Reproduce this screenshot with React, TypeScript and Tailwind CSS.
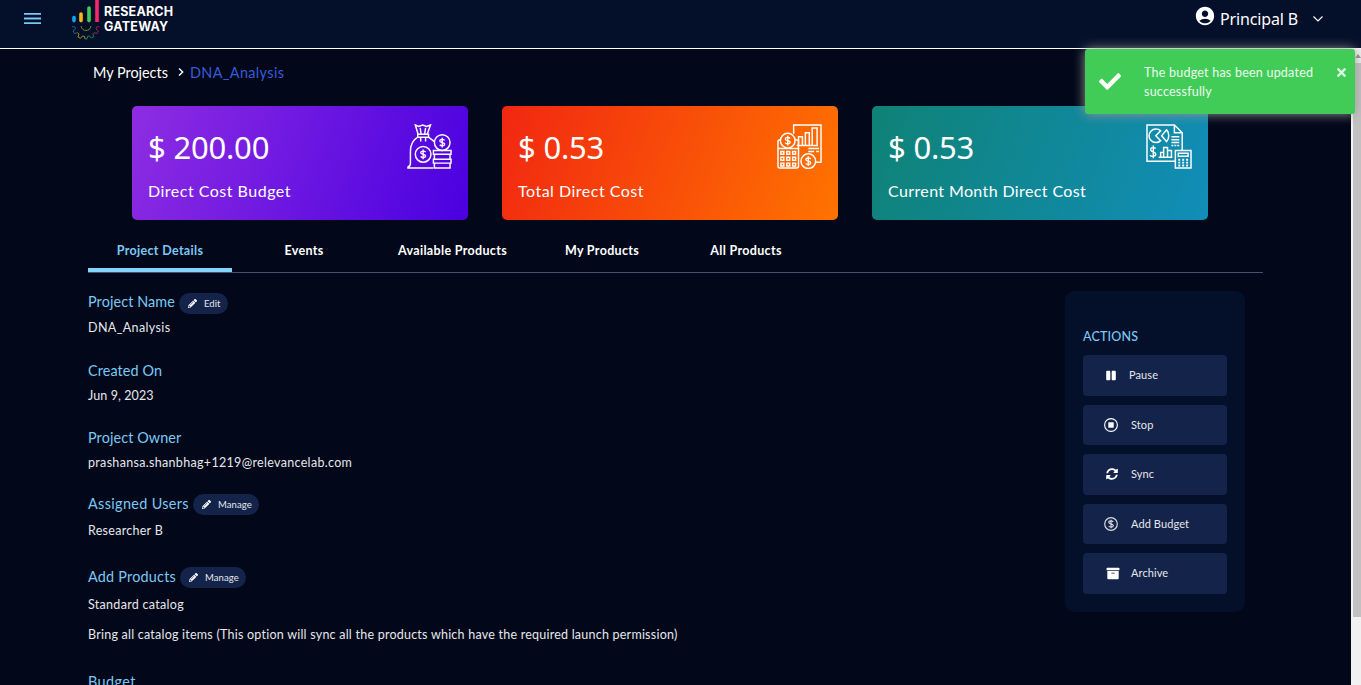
import { useState, type ReactNode } from 'react'
import clsx from 'clsx'
import { FaArchive, FaCheck, FaPause, FaPencilAlt, FaSyncAlt, FaTimes } from 'react-icons/fa'
import { MdAccountCircle } from 'react-icons/md'

const cards = [
  {
    amount: '$ 200.00',
    label: 'Direct Cost Budget',
    bg: 'bg-[linear-gradient(110deg,#8e2de2,#4a00e0)]',
    tracking: 'tracking-[0.5px]',
    icon: <MoneyBagIcon />,
  },
  {
    amount: '$ 0.53',
    label: 'Total Direct Cost',
    bg: 'bg-[linear-gradient(110deg,#f12711,#ff7300)]',
    tracking: 'tracking-[0.5px]',
    icon: <CostReportIcon />,
  },
  {
    amount: '$ 0.53',
    label: 'Current Month Direct Cost',
    bg: 'bg-[linear-gradient(110deg,#0f8275,#118db8)]',
    tracking: 'tracking-[0.38px]',
    icon: <MonthReportIcon />,
  },
]

const tabs = [
  { name: 'Project Details', width: 'w-36' },
  { name: 'Events', width: 'w-36' },
  { name: 'Available Products', width: 'w-[153px]' },
  { name: 'My Products', width: 'w-[146px]' },
  { name: 'All Products', width: 'w-[142px]' },
]

function Logo() {
  return (
    <div className="flex h-10 w-[104px] gap-1">
      <svg viewBox="0 0 28 40" className="h-10 w-7 shrink-0">
        <g strokeWidth="3.6" strokeLinecap="round">
          <path d="M2 17.6v3" stroke="#0ea5f5" />
          <path d="M9 14v6.6" stroke="#fbb713" />
          <path d="M17 8v12.6" stroke="#3ecb59" />
        </g>
        <path d="M25 0v22" stroke="#f9266c" strokeWidth="3.6" />
        <path d="M9 26c1 6 9 6 10 0" fill="none" stroke="#8d8f22" strokeWidth="0.9" />
        <g fill="none" strokeWidth="0.9" strokeLinejoin="round">
          <path d="M0 26.5l3 .5.5 2-2.5 2 1.5 2.5 3-.8" stroke="#1c6c8c" />
          <path d="M5.5 32.7l1.5 1.3-1 3 2.5 1.3 2-2.3 2 .4.5 2.6" stroke="#b99a1c" />
          <path d="M13 39h2l.5-2.6 2-.5 2 2.2 2.3-1.4-1-2.7" stroke="#2f8a4c" />
          <path d="M20.8 34l1.2-1.3 3 .8 1.3-2.5-2.3-2 .5-2 2.8-.5" stroke="#a52753" />
        </g>
      </svg>
      <p className="pt-1 font-['Inter'] text-[12.5px] leading-[15px] font-bold text-white">
        <span className="block tracking-[0.2px]">RESEARCH</span>
        <span className="block tracking-[0.25px]">GATEWAY</span>
      </p>
    </div>
  )
}

function MoneyBagIcon() {
  return (
    <svg viewBox="0 0 46 46" className="h-[45px] w-[45px] shrink-0" fill="none" stroke="#fff" strokeWidth="1.5">
      <path d="M11.5 11L8.5 1l3.5 1.5L16 1l4 1.5L24 1l-3.5 10M13.5 4l1 7M19 4l-1 7" />
      <path d="M11 10.5h11v3H11zM14 14v4M19 14v4" />
      <path d="M11 13.5C5 17 3.5 22 3.5 28v12c0 2.5-1 3.5-2.500 4V45h26M22 13.5l6 4.5" />
      <circle cx="16.5" cy="31" r="8" />
      <circle cx="36" cy="19" r="8" />
      <path d="M27 27h18v4H27zM28 31h16v5H28zM27 36h18v4H27zM28 40h16v5H28z" />
      <Dollar x={16.5} y={31} />
      <Dollar x={36} y={19} />
    </svg>
  )
}

function CostReportIcon() {
  return (
    <svg viewBox="0 0 46 46" className="h-[45px] w-[45px] shrink-0" fill="none" stroke="#fff" strokeWidth="1.5">
      <path d="M17 10V1h28v38h-6M20 22h22M32 25h11M32 28h6M40 28h3" />
      <path d="M22 22v-9h4v9M29 22V9h4v13M36 22V4h5v18" />
      <circle cx="11" cy="17" r="7.5" />
      <path d="M4 16H3c-1 0-2 1-2 2v25c0 1 1 2 2 2h17c1 0 2-1 2-2V17l-3-1M1 25h21" />
      <path d="M4 28h3v3H4zM10 28h3v3h-3zM16 28h3v3h-3zM4 34h3v3H4zM10 34h3v3h-3zM16 34h3v3h-3zM4 40h3v3H4zM10 40h3v3h-3zM16 40h3v3h-3z" />
      <circle cx="32" cy="38" r="7.5" />
      <Dollar x={11} y={17} />
      <Dollar x={32} y={38} />
    </svg>
  )
}

function MonthReportIcon() {
  return (
    <svg viewBox="0 0 47 46" className="h-[45px] w-[46px] shrink-0" fill="none" stroke="#fff" strokeWidth="1.5">
      <path d="M30 38H1V1h28l8 8v18M29 1v8h8" />
      <path d="M15 7a7 7 0 1 0 0 10l-5-5z" />
      <path d="M16 12l5-6c3 3 3 9 0 12z" />
      <path d="M26 13h8M26 16h8M26 19h8M26 22h2M29 22h2M32 22h2" />
      <path d="M13 34h14M15 34v-5h3v5M18 34V24h4v10M22 34v-7h4v7" />
      <path d="M30 27h16v18H30zM33 30h10v3H33z" />
      <path d="M33 36.5h10M33 39.5h10M33 42.5h10" strokeWidth="2" strokeDasharray="2 2" />
      <path d="M10 25c-4-2-6 0-5 2 1 2 5 1 5 4 0 2-4 3-6 1M7.5 22v13" />
    </svg>
  )
}

function Dollar({ x, y }: { x: number; y: number }) {
  return (
    <g transform={`translate(${x} ${y})`}>
      <path d="M2.5-2.2C1-4-2.5-3.5-2.5-1.5c0 2 5 1 5 3C2.5 3.5-1 4-2.5 2.2M0-5v10" strokeWidth="1.4" />
    </g>
  )
}

function PillButton({ children }: { children: ReactNode }) {
  return (
    <button className="flex h-[21px] items-center rounded-full bg-[#14234a] pr-[7px] pl-[9px] text-[9.5px] tracking-[0.1px] text-gray-200">
      <FaPencilAlt className="mr-[7px] mb-px h-[9px] w-[9px] text-white" />
      <span className="pt-px">{children}</span>
    </button>
  )
}

function Label({ children, className }: { children: ReactNode; className?: string }) {
  return <h4 className={clsx('text-[14.4px] leading-[22px] text-[#7cc8f5]', className)}>{children}</h4>
}

function Value({ children, className }: { children: ReactNode; className?: string }) {
  return <p className={clsx('text-[12.5px] leading-5 text-gray-200', className)}>{children}</p>
}

function Action({ icon, children, className }: { icon: ReactNode; children: ReactNode; className?: string }) {
  return (
    <button className="flex h-[40.5px] w-36 items-center rounded bg-[#14234a] pl-[21px] text-[11px] tracking-[0.1px] text-gray-200">
      <span className="flex w-[27px] items-center text-white">{icon}</span>
      <span className={className}>{children}</span>
    </button>
  )
}

export default function App() {
  const [activeTab, setActiveTab] = useState('Project Details')
  const [showToast, setShowToast] = useState(true)

  return (
    <div className="relative flex h-[685px] w-full flex-col overflow-hidden bg-[#020819] font-['Lato',sans-serif]">
      <header className="flex h-[49px] shrink-0 items-start justify-between border-b border-white bg-[#040f29] pr-[38px] pl-6">
        <div className="flex items-start">
          <svg viewBox="0 0 17 13" className="mt-3 mr-[31px] h-[13px] w-[17px]" stroke="#7cc8f5" strokeWidth="1.8">
            <path d="M0 1.8h17M0 6.5h17M0 11.2h17" />
          </svg>
          <Logo />
        </div>
        <div className="flex h-9 items-center text-white">
          <MdAccountCircle className="mb-1 h-[22px] w-[22px]" />
          <span className="mt-0.5 ml-1 font-['Noto_Sans'] text-base tracking-[-0.15px]">Principal B</span>
          <svg viewBox="0 0 10 6" className="mt-0.5 ml-[15px] h-1.5 w-[10px]" fill="none" stroke="#fff" strokeWidth="1.2">
            <path d="M.5.5L5 5 9.5.5" />
          </svg>
        </div>
      </header>

      <div className="flex min-h-0 flex-1">
        <main className="min-w-0 flex-1 overflow-hidden pl-[88px]">
          <nav className="flex h-[57px] items-start pt-[13px] pl-[5px] text-[14.4px] leading-[22px]">
            <span className="w-[75px] whitespace-nowrap text-white">My Projects</span>
            <svg viewBox="0 0 6 8" className="mt-1.5 mr-[6px] ml-[10px] h-2 w-1.5" fill="none" stroke="#fff" strokeWidth="1.4">
              <path d="M1 .5L4.7 4 1 7.5" />
            </svg>
            <span className="tracking-[0.38px] text-[#365bdc]">DNA_Analysis</span>
          </nav>

          <section className="flex gap-[34px] pl-11">
            {cards.map((card) => (
              <div key={card.label} className={clsx('flex h-[114px] w-[336px] shrink-0 justify-between rounded-[5px] pt-[18px] pr-4 pl-4 text-white', card.bg)}>
                <div>
                  <p className="font-['Noto_Sans'] text-[31px] leading-[46px] tracking-[-0.2px]">{card.amount}</p>
                  <p className={clsx('mt-[10px] text-base leading-[22px]', card.tracking)}>{card.label}</p>
                </div>
                {card.icon}
              </div>
            ))}
          </section>

          <div className="mt-2 flex h-[45px] w-[1175px] border-b border-[#465270]">
            {tabs.map((tab) => (
              <button
                key={tab.name}
                onClick={() => setActiveTab(tab.name)}
                className={clsx(
                  'h-11 border-b-4 pt-1.5 text-[12.5px] leading-[34px] font-bold tracking-[0.33px] whitespace-nowrap',
                  tab.width,
                  activeTab === tab.name ? 'border-[#87d3ff] text-[#7cc8f5]' : 'border-transparent text-white',
                )}
              >
                {tab.name}
              </button>
            ))}
          </div>

          <div className="flex items-start justify-between pt-[18px] pr-[106px]">
            <section className="pt-px">
              <div className="flex items-start gap-1">
                <Label className="-mt-px tracking-[0.1px]">Project Name</Label>
                <div className="mt-px"><PillButton>Edit</PillButton></div>
              </div>
              <Value className="mt-1 tracking-[0.38px]">DNA_Analysis</Value>

              <Label className="mt-[22px] tracking-[0.1px]">Created On</Label>
              <Value className="mt-1 tracking-[0.1px]">Jun 9, 2023</Value>

              <Label className="mt-[21px] tracking-[0.1px]">Project Owner</Label>
              <Value className="mt-1 tracking-[0.32px]">prashansa.shanbhag+1219@relevancelab.com</Value>

              <div className="mt-[20px] flex items-start gap-1">
                <Label className="tracking-[0.35px]">Assigned Users</Label>
                <div className="mt-px"><PillButton>Manage</PillButton></div>
              </div>
              <Value className="mt-1.5 tracking-[0.28px]">Researcher B</Value>

              <div className="mt-[25px] flex items-start gap-1">
                <Label className="tracking-[0.22px]">Add Products</Label>
                <div className="mt-px"><PillButton>Manage</PillButton></div>
              </div>
              <Value className="mt-[7px] tracking-[0.3px]">Standard catalog</Value>
              <Value className="mt-2.5 tracking-[0.23px]">
                Bring all catalog items (This option will sync all the products which have the required launch permission)
              </Value>

              <Label className="mt-[26px] tracking-[0.4px]">Budget</Label>
            </section>

            <aside className="flex h-[321px] w-[180px] shrink-0 flex-col gap-[9px] rounded-[9px] bg-[#040f29] px-[18px] pt-[35px]">
              <h3 className="h-5 pt-px text-[12.5px] leading-5 font-medium tracking-[0.2px] text-[#7cc8f5]">ACTIONS</h3>
              <Action icon={<FaPause className="ml-0.5 h-[11px] w-[10px]" />} className="-ml-0.5">Pause</Action>
              <Action
                icon={
                  <svg viewBox="0 0 14 14" className="h-3.5 w-3.5">
                    <circle cx="7" cy="7" r="6.4" fill="none" stroke="#fff" strokeWidth="1.1" />
                    <path d="M4.3 4.3h5.4v5.4H4.3z" fill="#fff" />
                  </svg>
                }
              >
                Stop
              </Action>
              <Action icon={<FaSyncAlt className="ml-0.5 h-3 w-3" />}>Sync</Action>
              <Action
                icon={
                  <svg viewBox="0 0 14 14" className="h-3.5 w-3.5" fill="none" stroke="#d5d8e0" strokeWidth="1.2">
                    <circle cx="7" cy="7" r="6.3" />
                    <path d="M9.2 5C8 3.3 4.700 3.600 4.700 5.300c0 2 4.600 1.200 4.600 3.300C9.300 10.500 6 10.800 4.700 9M7 2.700v8.600" />
                  </svg>
                }
              >
                Add Budget
              </Action>
              <Action icon={<FaArchive className="ml-0.5 h-[13px] w-[14px]" />}>Archive</Action>
            </aside>
          </div>
        </main>

        {/* Scroll track */}
        <div className="w-[10px] shrink-0 bg-[#f1f1f1] pl-0.5">
          <div className="flex h-[14px] items-center">
            <svg viewBox="0 0 6 4" className="ml-0.5 h-1 w-1.5"><path d="M0 4l3-4 3 4z" fill="#8b8b8b" /></svg>
          </div>
          <div className="h-[554px] bg-[#c1c1c1]" />
        </div>
      </div>

      {showToast && (
        <div className="absolute top-[49px] left-[1085px] flex h-[65px] w-[270px] rounded-[3px] bg-[#41cc58] text-white shadow-[0_0_12px_#999]">
          <FaCheck className="mt-[21px] ml-[14px] h-[23px] w-[22px]" />
          <p className="mt-[13.5px] ml-[23px] w-[180px] text-[12.5px] leading-[19px] tracking-[0.23px] text-white/90">The budget has been updated successfully</p>
          <button className="absolute top-[17px] right-[8px]" onClick={() => setShowToast(false)}>
            <FaTimes className="h-[13px] w-[11px] text-white/80" />
          </button>
        </div>
      )}
    </div>
  )
}
